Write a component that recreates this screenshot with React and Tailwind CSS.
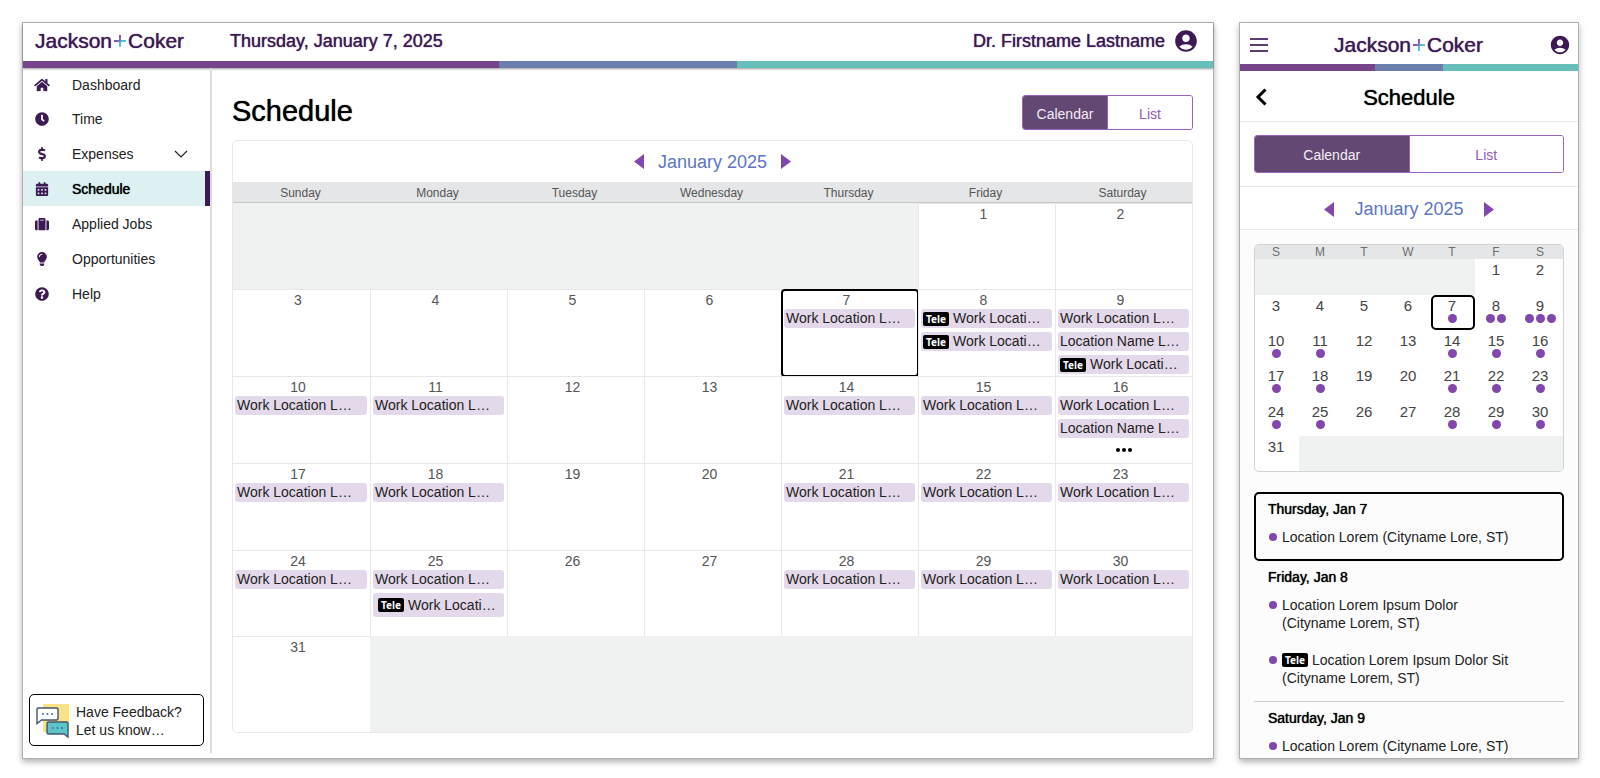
import { FaHome, FaClock, FaDollarSign, FaSuitcase, FaLightbulb, FaQuestionCircle } from "react-icons/fa";
import { FaCalendarDays } from "react-icons/fa6";
import { MdAccountCircle } from "react-icons/md";

const DAYS = ["Sunday", "Monday", "Tuesday", "Wednesday", "Thursday", "Friday", "Saturday"];
const WORK = { text: "Work Location L…" };
const NAME = { text: "Location Name L…" };
const TELE = { text: "Work Locati…", tele: true };
const TODAY = 7;

const EVENTS = {
  7: [WORK],
  8: [TELE, TELE],
  9: [WORK, NAME, TELE],
  10: [WORK],
  11: [WORK],
  14: [WORK],
  15: [WORK],
  16: [WORK, NAME],
  17: [WORK],
  18: [WORK],
  21: [WORK],
  22: [WORK],
  23: [WORK],
  24: [WORK],
  25: [WORK, { ...TELE, tall: true }],
  28: [WORK],
  29: [WORK],
  30: [WORK],
};
const HAS_MORE = [16];
const DOTS = { 16: 1, 25: 1 };

const WEEKS = [
  [1, 2],
  [3, 4, 5, 6, 7, 8, 9],
  [10, 11, 12, 13, 14, 15, 16],
  [17, 18, 19, 20, 21, 22, 23],
  [24, 25, 26, 27, 28, 29, 30],
  [31],
];
const ROW_HEIGHTS = ["h-[86px]", "h-[87px]", "h-[87px]", "h-[87px]", "h-[86px]", "h-24"];
const MINI_ROW_HEIGHTS = ["h-9", "h-[35px]", "h-[35px]", "h-9", "h-[35px]", "h-[35px]"];

const NAV = [
  { label: "Dashboard", icon: FaHome },
  { label: "Time", icon: FaClock },
  { label: "Expenses", icon: FaDollarSign, expandable: true },
  { label: "Schedule", icon: FaCalendarDays, active: true },
  { label: "Applied Jobs", icon: FaSuitcase },
  { label: "Opportunities", icon: FaLightbulb },
  { label: "Help", icon: FaQuestionCircle },
];

const AGENDA = [
  { day: "Thursday, Jan 7", today: true, items: [{ lines: ["Location Lorem (Cityname Lore, ST)"] }] },
  {
    day: "Friday, Jan 8",
    items: [
      { lines: ["Location Lorem Ipsum Dolor", "(Cityname Lorem, ST)"] },
      { tele: true, lines: ["Location Lorem Ipsum Dolor Sit", "(Cityname Lorem, ST)"] },
    ],
  },
  { day: "Saturday, Jan 9", items: [{ lines: ["Location Lorem (Cityname Lore, ST)"] }] },
];

function Logo({ id }) {
  return (
    <a href="#home" aria-label="Jackson+Coker" className="flex items-center text-[21px] leading-6 text-[#3d1a54] [text-shadow:0_0_1px_currentColor]">
      <span>Jackson</span>
      <svg viewBox="0 0 12 12" className="mx-0.5 h-3 w-3" aria-hidden="true">
        <defs>
          <linearGradient id={id} x1="0" y1="0" x2="12" y2="12" gradientUnits="userSpaceOnUse">
            <stop offset="0.3" stopColor="#8a48b8" />
            <stop offset="0.5" stopColor="#6d86c6" />
            <stop offset="0.6" stopColor="#4fcfca" />
          </linearGradient>
        </defs>
        <path d="M5 0h2v5h5v2H7v5H5V7H0V5h5z" fill={`url(#${id})`} />
      </svg>
      <span>Coker</span>
    </a>
  );
}

function BrandBar() {
  return (
    <div className="flex h-[7px]">
      <div className="w-2/5 bg-[#76448a]" />
      <div className="w-1/5 bg-[#6b7fae]" />
      <div className="w-2/5 bg-[#66c0b9]" />
    </div>
  );
}

function TeleBadge() {
  return (
    <span className="inline-block rounded-xs bg-black px-[3px] font-['Noto_Sans',sans-serif] text-[10px] leading-[14px] font-bold text-white">
      Tele
    </span>
  );
}

function ViewToggle({ className }) {
  return (
    <div className={`flex overflow-hidden rounded-[3px] border border-[#9a63bd] text-sm ${className}`}>
      <button type="button" aria-pressed="true" className="flex-1 bg-[#634873] pt-0.5 text-[#f3eef6]">Calendar</button>
      <button type="button" aria-pressed="false" className="flex-1 border-l border-[#9a63bd] bg-white pt-0.5 text-[#9159b8]">List</button>
    </div>
  );
}

function MonthNav({ gap, size }) {
  return (
    <div className={`flex items-center justify-center ${gap}`}>
      <button type="button" aria-label="Previous month">
        <svg viewBox="0 0 10 15" className="h-[15px] w-2.5" fill="#8247ad"><path d="M10 0v15L0 7.5z" /></svg>
      </button>
      <span className={`leading-6 text-[#5c76c4] ${size}`}>January 2025</span>
      <button type="button" aria-label="Next month">
        <svg viewBox="0 0 10 15" className="h-[15px] w-2.5" fill="#8247ad"><path d="M0 0v15l10-7.5z" /></svg>
      </button>
    </div>
  );
}

function DayCell({ day, first, height }) {
  const events = EVENTS[day] || [];
  return (
    <td className={`relative border-t border-[#e8e8e8] p-0 align-top ${height} ${first ? "" : "border-l"}`}>
      {day === TODAY && <span className="absolute -inset-px rounded-sm border-2 border-black" />}
      <div className="flex flex-col gap-1 pr-[3px] pl-0.5">
        <div className="-mb-1 pt-0.5 pr-1.5 text-center text-sm leading-[17px] text-[#555]">{day}</div>
        {events.map((e, i) => (
          <div
            key={i}
            className={`flex items-center gap-1 overflow-hidden rounded-[3px] bg-[#e4d9ea] whitespace-nowrap text-[#222] ${e.tall ? "h-6 px-[5px]" : "h-[19px] px-0.5"}`}
          >
            {e.tele && <TeleBadge />}
            <span className="text-sm leading-[19px]">{e.text}</span>
          </div>
        ))}
        {HAS_MORE.includes(day) && (
          <button type="button" aria-label="More" className="flex h-4 items-center justify-center gap-0.5">
            <span className="h-1 w-1 rounded-full bg-black" />
            <span className="h-1 w-1 rounded-full bg-black" />
            <span className="h-1 w-1 rounded-full bg-black" />
          </button>
        )}
      </div>
    </td>
  );
}

function MonthTable() {
  return (
    <table className="w-full table-fixed border-separate border-spacing-0">
      <thead>
        <tr>
          {DAYS.map((d) => (
            <th key={d} className="h-[21px] border-b border-[#c6c6c6] bg-[#e5e6e8] p-0 pt-0.5 pr-0.5 text-xs leading-4 font-normal text-[#555]">{d}</th>
          ))}
        </tr>
      </thead>
      <tbody>
        {WEEKS.map((week, w) => (
          <tr key={w}>
            {w === 0 && <td colSpan={5} className="bg-[#f0f2f1]" />}
            {week.map((day, i) => (
              <DayCell key={day} day={day} first={w > 0 && i === 0} height={ROW_HEIGHTS[w]} />
            ))}
            {w === 5 && <td colSpan={6} className="bg-[#f0f2f1]" />}
          </tr>
        ))}
      </tbody>
    </table>
  );
}

function MiniMonth() {
  return (
    <div className="overflow-hidden rounded-[5px] border border-[#d2d4d4] bg-white">
      <table className="w-full table-fixed border-separate border-spacing-0">
        <thead>
          <tr>
            {DAYS.map((d) => (
              <th key={d} className="h-3.5 bg-[#e5e6e8] p-0 pr-0.5 text-xs leading-3.5 font-normal text-[#6e6e6e]">{d[0]}</th>
            ))}
          </tr>
        </thead>
        <tbody>
          {WEEKS.map((week, w) => (
            <tr key={w}>
              {w === 0 && <td colSpan={5} className="bg-[#f0f2f1]" />}
              {week.map((day) => {
                const count = DOTS[day] || (EVENTS[day] || []).length;
                return (
                  <td key={day} className={`relative p-0 align-top ${MINI_ROW_HEIGHTS[w]}`}>
                    {day === TODAY && <span className="absolute inset-0 rounded-[5px] border-2 border-black" />}
                    <div className="pt-0.5 pr-0.5 text-center text-[15px] leading-[17px] text-[#444]">{day}</div>
                    <div className="flex justify-center gap-0.5 pr-0.5">
                      {Array.from({ length: count }, (_, i) => (
                        <span key={i} className="h-[9px] w-[9px] rounded-full bg-[#8247ad]" />
                      ))}
                    </div>
                  </td>
                );
              })}
              {w === 5 && <td colSpan={6} className="bg-[#f0f2f1]" />}
            </tr>
          ))}
        </tbody>
      </table>
    </div>
  );
}

function FeedbackIcon() {
  return (
    <svg viewBox="0 0 34 36" className="h-9 w-[34px] shrink-0" aria-hidden="true">
      <path d="M7 1h26v28H7z" fill="#f8e487" />
      <path d="M2.500 5h18q1.500 0 1.500 1.500v9q0 1.500-1.500 1.500H5.500L1 20.500V6.500Q1 5 2.500 5z" fill="#fff" stroke="#44546e" strokeWidth="1.400" />
      <path d="M12.500 19h18q1.500 0 1.500 1.500V34l-4-3H12.500q-1.500 0-1.500-1.500v-9q0-1.500 1.500-1.500z" fill="#5cc5c8" stroke="#44546e" strokeWidth="1.400" />
      <g fill="#3a6ea5">
        <circle cx="7" cy="11" r="1" /><circle cx="11.500" cy="11" r="1" /><circle cx="16" cy="11" r="1" />
        <circle cx="17" cy="25" r="1" /><circle cx="21.500" cy="25" r="1" /><circle cx="26" cy="25" r="1" />
      </g>
    </svg>
  );
}

function Sidebar() {
  return (
    <aside className="mb-[5px] flex w-[189px] shrink-0 flex-col border-r-2 border-[#dcdcdc]">
      <nav className="flex flex-col">
        {NAV.map(({ label, icon: Icon, active, expandable }, i) => (
          <a
            key={label}
            href={`#${label.toLowerCase().replace(" ", "-")}`}
            aria-current={active ? "page" : undefined}
            className={`flex items-center text-sm ${i === 0 ? "h-[33px]" : "h-[35px]"} ${active ? "border-r-[5px] border-[#3d1a54] bg-[#ddf1f3] text-black [text-shadow:0_0_1px_currentColor]" : "text-[#222]"}`}
          >
            <Icon className="ml-[11px] h-3.5 w-4 text-[#3d1a54]" />
            <span className="ml-[22px] flex-1">{label}</span>
            {expandable && (
              <svg viewBox="0 0 14 8" className="mr-[22px] h-2 w-3.5" fill="none" stroke="#222" strokeWidth="1.200" aria-hidden="true">
                <path d="M1 1l6 6 6-6" />
              </svg>
            )}
          </a>
        ))}
      </nav>
      <button type="button" className="mx-1.5 mt-auto mb-[7px] flex h-[52px] items-center gap-1.5 rounded-[5px] border border-black pt-px pl-1.5 text-left text-sm leading-[18px] text-[#222]">
        <FeedbackIcon />
        <span>Have Feedback?<br />Let us know…</span>
      </button>
    </aside>
  );
}

function DesktopView() {
  return (
    <section className="flex min-w-0 flex-1 flex-col border border-[#b0b0b0] bg-white shadow-[0_3px_6px_rgba(0,0,0,0.3)]">
      <header className="shadow-[0_1px_2px_rgba(0,0,0,0.4)]">
        <div className="flex h-[38px] items-center pr-3.5 pb-0.5 pl-3 text-lg text-[#3d1a54]">
          <div className="w-[195px]"><Logo id="plus-desktop" /></div>
          <p className="[text-shadow:0_0_1px_currentColor]">Thursday, January 7, 2025</p>
          <a href="#profile" className="ml-auto flex items-center gap-2">
            <span className="[text-shadow:0_0_1px_currentColor]">Dr. Firstname Lastname</span>
            <MdAccountCircle className="h-[26px] w-[26px]" />
          </a>
        </div>
        <BrandBar />
      </header>
      <div className="flex flex-1">
        <Sidebar />
        <main className="min-w-0 flex-1 px-5 pt-[27px] pb-[25px]">
          <div className="flex items-start justify-between pb-2.5">
            <h1 className="text-[29px] leading-8 text-black [text-shadow:0_0_1px_currentColor]">Schedule</h1>
            <ViewToggle className="h-[35px] w-[171px]" />
          </div>
          <div className="overflow-hidden rounded-[5px] border border-[#e8e8e8]">
            <div className="flex h-[41px] items-center justify-center">
              <MonthNav gap="gap-3.5" size="text-lg" />
            </div>
            <MonthTable />
          </div>
        </main>
      </div>
    </section>
  );
}

function MobileView() {
  return (
    <section className="flex w-[340px] shrink-0 flex-col overflow-hidden border border-[#b0b0b0] bg-[#fcfcfc] shadow-[0_3px_6px_rgba(0,0,0,0.3)]">
      <header className="bg-white">
        <div className="flex h-[41px] items-center justify-between pt-0.5 pr-[7px] pl-2.5">
          <button type="button" aria-label="Menu" className="flex w-[18px] flex-col gap-1">
            <span className="h-0.5 bg-[#5b3d70]" />
            <span className="h-0.5 bg-[#5b3d70]" />
            <span className="h-0.5 bg-[#5b3d70]" />
          </button>
          <Logo id="plus-mobile" />
          <a href="#profile" aria-label="Profile"><MdAccountCircle className="h-[22px] w-[22px] text-[#3d1a54]" /></a>
        </div>
        <BrandBar />
      </header>
      <div className="grid h-[51px] grid-cols-[24px_1fr_24px] items-center border-b border-[#e8e8e8] bg-white px-3.5 pt-0.5">
        <button type="button" aria-label="Back">
          <svg viewBox="0 0 12 18" className="h-[18px] w-3.5" fill="none" stroke="#000" strokeWidth="3"><path d="M10.500 1.500L3 9l7.500 7.500" /></svg>
        </button>
        <h2 className="text-center text-[22px] text-black [text-shadow:0_0_1px_currentColor]">Schedule</h2>
      </div>
      <div className="border-b border-[#e8e8e8] bg-white px-3.5 py-[13px]">
        <ViewToggle className="h-[38px]" />
      </div>
      <div className="border-b border-[#e8e8e8] bg-white pt-2.5 pb-2">
        <MonthNav gap="gap-5" size="text-lg" />
      </div>
      <div className="px-3.5 pt-3.5">
        <MiniMonth />
        <div className="pt-5">
          {AGENDA.map((group, g) => (
            <section
              key={group.day}
              className={`${group.today ? "rounded-[5px] border-2 border-black px-3 pt-1.5 pb-[13px]" : "px-3.5 pt-[7px]"} ${g === 1 ? "border-b border-[#ccc] pb-3.5" : ""}`}
            >
              <h3 className="text-sm leading-[18px] text-black [text-shadow:0_0_1px_currentColor]">{group.day}</h3>
              <ul className="flex flex-col gap-[19px] pt-2.5">
                {group.items.map((item, i) => (
                  <li key={i} className="flex gap-[5px] pl-px text-sm leading-[18px] text-[#222]">
                    <span className="mt-[5px] h-2 w-2 shrink-0 rounded-full bg-[#8247ad]" />
                    <div>
                      {item.lines.map((line, n) => (
                        <p key={line} className="flex items-center gap-1">
                          {item.tele && n === 0 && <TeleBadge />}
                          {line}
                        </p>
                      ))}
                    </div>
                  </li>
                ))}
              </ul>
            </section>
          ))}
        </div>
      </div>
    </section>
  );
}

export default function App() {
  return (
    <div className="flex gap-[25px] bg-white pt-[22px] pr-[21px] pb-5 pl-[22px] font-['Liberation_Sans',Arial,sans-serif]">
      <DesktopView />
      <MobileView />
    </div>
  );
}
